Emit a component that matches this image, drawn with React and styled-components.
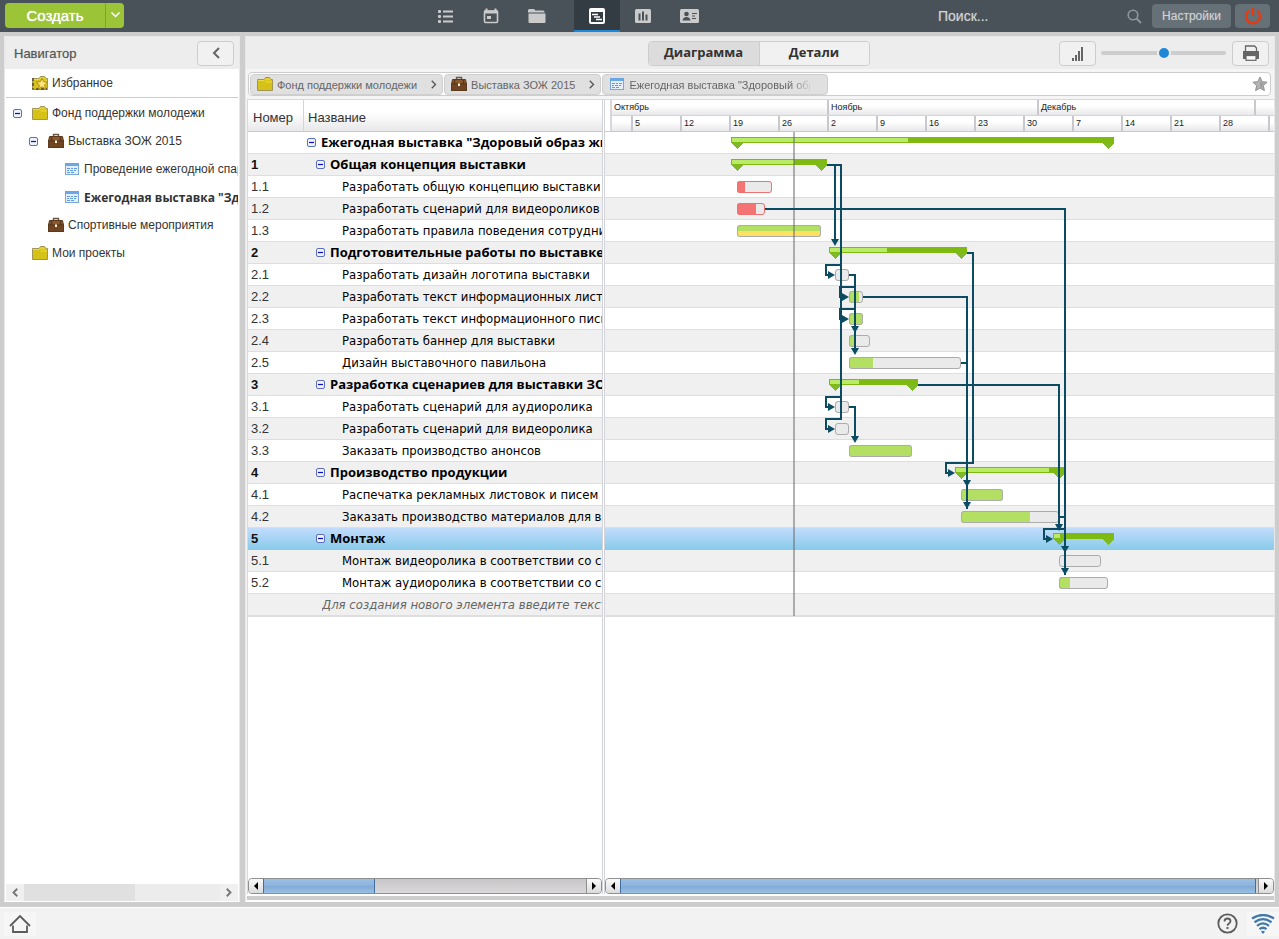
import React from 'react';
import styled, { createGlobalStyle, css } from 'styled-components';

const sans = '"Liberation Sans", Arial, sans-serif';
const tahoma = '"DejaVu Sans Condensed", Tahoma, sans-serif';
const tahomaBold = '"Open Sans", Tahoma, sans-serif';

const GlobalStyle = createGlobalStyle`
  *, *::before, *::after { box-sizing: border-box; }
  body { margin: 0; font-family: ${sans}; font-size: 12px; color: #333; background: #cdcdcd; }
  button, input { font: inherit; color: inherit; margin: 0; padding: 0; border: 0; background: none; }
  svg { display: block; flex: none; }
  ul { list-style: none; margin: 0; padding: 0; }
`;

/* ---------- page frame ---------- */

const Page = styled.div`
  min-height: 100vh;
  display: flex;
  flex-direction: column;
`;

const TopBar = styled.header`
  height: 32px;
  flex: none;
  display: flex;
  align-items: center;
  padding: 0 9px 0 5px;
  background: #495259;
`;

const Workspace = styled.main`
  flex: 1;
  min-height: 0;
  display: flex;
  gap: 5px;
  padding: 4px 4px 5px;
  background: #cdcdcd;
`;

const Footer = styled.footer`
  height: 32px;
  flex: none;
  display: flex;
  align-items: center;
  justify-content: space-between;
  padding: 0 0 0 4px;
  border-top: 1px solid #fff;
  background: #f2f2f2;
`;

const FooterButton = styled.button`
  display: flex;
  align-items: center;
  justify-content: center;
  width: 32px;
  height: 24px;
  background: ${(p) => (p.$lit ? '#f6f6f6' : 'none')};
`;

const FooterGroup = styled.div`
  display: flex;
  gap: 4px;
`;

/* ---------- top bar ---------- */

const CreateGroup = styled.div`
  display: flex;
  margin-top: -2px;
  border-radius: 4px;
  overflow: hidden;
  background: #9bc536;
`;

const CreateButton = styled.button`
  width: 100px;
  height: 25px;
  font-size: 15px;
  color: #fff;
  text-shadow: 0 0 1px #fff;
`;

const CreateMenuButton = styled.button`
  width: 19px;
  height: 25px;
  display: flex;
  align-items: center;
  justify-content: center;
  border-left: 1px solid #81a626;
`;

const Modules = styled.nav`
  display: flex;
  margin-left: 298px;
  height: 32px;
`;

const ModuleButton = styled.button`
  width: 46px;
  height: 32px;
  display: flex;
  align-items: center;
  justify-content: center;
  color: #cbcbcb;
  ${(p) =>
    p.$active &&
    css`
      margin-left: 14px;
      color: #fff;
      background: #333c43;
      border-bottom: 2px solid #1f87d8;
      padding-top: 2px;
    `}
`;

const SearchBox = styled.label`
  display: flex;
  align-items: center;
  margin-left: auto;
  width: 204px;
  margin-right: 10px;
`;

const SearchInput = styled.input`
  flex: 1;
  min-width: 0;
  font-size: 14px;
  outline: 0;
  &::placeholder { color: #d0d2d3; opacity: 1; text-shadow: 0 0 1px #999; }
`;

const SlateButton = styled.button`
  width: ${(p) => p.$width};
  height: 24px;
  margin-right: ${(p) => (p.$last ? '0' : '4px')};
  display: flex;
  align-items: center;
  justify-content: center;
  border-radius: 4px;
  background: #667077;
  color: #cfd2d4;
  text-shadow: 0 0 1px #999;
`;

/* ---------- panels ---------- */

const Panel = styled.section`
  display: flex;
  flex-direction: column;
  min-width: 0;
  border: 1px solid #e8e8e8;
  border-bottom: 1px solid #fff;
  background: ${(p) => (p.$main ? '#f5f5f5' : '#fff')};
  ${(p) => (p.$main ? 'flex: 1;' : 'width: 236px; flex: none;')}
`;

const PanelHead = styled.div`
  height: 32px;
  flex: none;
  display: flex;
  align-items: center;
  padding: 0 5px 0 ${(p) => (p.$main ? '2px' : '9px')};
  background: #ededed;
`;

const PanelTitle = styled.h2`
  flex: 1;
  margin: 0;
  font-size: 13px;
  font-weight: 400;
  color: #555;
  text-shadow: 0 0 1px #aaa;
`;

const ToolButton = styled.button`
  width: 37px;
  height: 25px;
  display: flex;
  align-items: center;
  justify-content: center;
  border: 1px solid #cdcdcd;
  border-radius: 4px;
  background: #f1f1f1;
`;

/* ---------- navigator ---------- */

const Tree = styled.ul`
  flex: 1;
  margin: 0 1px;
  overflow: hidden;
`;

const TreeItem = styled.li`
  height: 28px;
  display: flex;
  align-items: center;
  gap: 4px;
  padding-left: ${(p) => 7 + p.$level * 16}px;
  white-space: nowrap;
  ${(p) => p.$divided && css`
    height: 29px;
    border-bottom: 1px solid #cdcdcd;
    margin-bottom: 1px;
  `}
`;

const TreeToggle = styled.button`
  width: 9px;
  height: 9px;
  margin-right: 6px;
  visibility: ${(p) => (p.$hidden ? 'hidden' : 'visible')};
`;

const TreeLink = styled.a`
  color: #333;
  text-decoration: none;
  ${(p) => p.$current && css`font-family: ${tahomaBold}; font-weight: 700;`}
`;

const PlainScroll = styled.div`
  display: flex;
  height: 17px;
  margin: 0 1px;
  background: #ececec;
`;

const PlainArrow = styled.button`
  width: 18px;
  display: flex;
  align-items: center;
  justify-content: center;
  background: #f0f0f0;
`;

const PlainTrack = styled.div`
  flex: 1;
`;

const PlainThumb = styled.div`
  width: 111px;
  height: 17px;
  background: #e0e0e0;
`;

/* ---------- main toolbar and breadcrumb ---------- */

const ToolSide = styled.div`
  flex: 1;
  display: flex;
  align-items: center;
  justify-content: flex-end;
`;

const Tabs = styled.div`
  display: flex;
  border: 1px solid #cdcdcd;
  border-radius: 4px;
  overflow: hidden;
`;

const Tab = styled.button`
  width: 110px;
  height: 23px;
  padding: 0 0 2px;
  font-family: ${tahomaBold};
  font-size: 13px;
  font-weight: 700;
  color: #333;
  background: ${(p) => (p.$active ? '#dcdcdc' : '#f1f1f1')};
  & + & { border-left: 1px solid #cdcdcd; }
`;

const Zoom = styled.input`
  appearance: none;
  width: 125px;
  height: 14px;
  margin: 0 6px 0 5px;
  &::-webkit-slider-runnable-track {
    height: 4px;
    border-radius: 2px;
    background: #cdcdcd;
  }
  &::-webkit-slider-thumb {
    appearance: none;
    width: 14px;
    height: 14px;
    margin-top: -5px;
    border: 2px solid #ededed;
    border-radius: 50%;
    background: #1f87d8;
  }
`;

const Crumbs = styled.nav`
  height: 24px;
  flex: none;
  display: flex;
  align-items: center;
  gap: 1px;
  margin: 3px 3px 3px 2px;
  padding: 0 2px 0 1px;
  border: 1px solid #cdcdcd;
  border-radius: 4px;
  background: #fff;
`;

const Crumb = styled.a`
  height: 21px;
  display: flex;
  align-items: center;
  gap: 4px;
  padding: 0 5px 0 6px;
  border: 1px solid #cfcfcf;
  border-radius: 4px;
  background: #e0e0e0;
  color: #666;
  font-size: 11px;
  text-decoration: none;
  white-space: nowrap;
`;

const CrumbLabel = styled.span`
  padding-top: 2px;
  overflow: hidden;
  ${(p) => p.$clipped && css`
    width: 181px;
    margin-right: 12px;
    mask-image: linear-gradient(to right, #000 160px, transparent 184px);
  `}
`;

const CrumbArrow = styled.span`
  margin-left: 10px;
`;

const StarButton = styled.button`
  margin-left: auto;
`;

/* ---------- grid and chart ---------- */

const Split = styled.div`
  flex: 1;
  display: flex;
  margin-left: 1px;
  border-top: 1px solid #d8d8d8;
  background: #fff;
`;

const GridPane = styled.div`
  width: 358px;
  flex: none;
  display: flex;
  flex-direction: column;
  border-left: 1px solid #d8d8d8;
  border-right: 3px double #d3d3da;
`;

const ChartPane = styled.div`
  flex: 1;
  min-width: 0;
  display: flex;
  flex-direction: column;
`;

const headFill = css`
  background: linear-gradient(#fff 40%, #e8e8ea);
`;

const Grid = styled.table`
  width: 354px;
  table-layout: fixed;
  border-collapse: separate;
  border-spacing: 0;
`;

const HeadCell = styled.th`
  width: ${(p) => p.$width};
  height: 32px;
  padding: 3px 4px 0 5px;
  text-align: left;
  font-size: 13px;
  font-weight: 400;
  color: #333;
  border-bottom: 1px solid #c8c8ce;
  & + & { border-left: 1px solid #d3d3da; padding-left: 4px; }
  ${headFill}
`;

const rowFill = css`
  border-bottom: 1px solid ${(p) => (p.$selected ? '#8bcbea' : '#dedede')};
  background: ${(p) =>
    p.$selected ? 'linear-gradient(#c2dcfd, #8bcbea)' : p.$alt ? '#f0f0f0' : '#fff'};
`;

const cellText = css`
  height: 22px;
  line-height: 21px;
  overflow: hidden;
  white-space: nowrap;
  font-size: 13px;
`;

const GridRow = styled.tr``;

const NumberCell = styled.td`
  ${cellText}
  ${rowFill}
  padding: 0 3px;
  color: ${(p) => (p.$group ? '#111' : '#333')};
  font-weight: ${(p) => (p.$group ? 700 : 400)};
`;

const NameCell = styled.td`
  ${cellText}
  ${rowFill}
  padding: 0 0 0 ${(p) => [4, 13, 39, 19][p.$level]}px;
  color: #000;
  font-family: ${(p) => (p.$group ? tahomaBold : tahoma)};
  font-weight: ${(p) => (p.$group ? 700 : 400)};
`;

const NameLine = styled.div`
  height: 21px;
  display: flex;
  align-items: center;
  gap: 5px;
`;

const NewItem = styled.input`
  width: 100%;
  height: 21px;
  font-style: italic;
  outline: 0;
  &::placeholder { color: #666; opacity: 1; }
`;

const TimeScale = styled.div`
  height: 32px;
  overflow: hidden;
  border-bottom: 1px solid #c8c8ce;
  padding-left: 5px;
`;

const ScaleRow = styled.div`
  display: flex;
  height: ${(p) => (p.$weeks ? '15px' : '16px')};
  font-size: 9px;
  line-height: 14px;
  color: #222;
  ${headFill}
  border-bottom: ${(p) => (p.$weeks ? '0' : '1px solid #d3d3da')};
`;

const ScaleCell = styled.div`
  width: ${(p) => p.$days * 7}px;
  flex: none;
  overflow: hidden;
  padding-left: 2px;
  border-left: 2px solid ${(p) => (p.$first ? '#d8d8dc' : '#c8c8ce')};
`;

const ChartBody = styled.div`
  position: relative;
  overflow: hidden;
`;

const ChartRow = styled.div`
  height: 22px;
  ${rowFill}
`;

const ChartLayer = styled.svg`
  position: absolute;
  top: 0;
  left: 0;
`;

const Filler = styled.div`
  flex: 1;
  border-top: 1px solid #dedede;
`;

const Scrollbar = styled.div`
  display: flex;
  height: 16px;
  flex: none;
  border: 1px solid #8f8f8f;
  border-radius: 4px;
  overflow: hidden;
  background: linear-gradient(#c9c6c8, #dad8da);
`;

const ScrollArrow = styled.button`
  width: 14px;
  display: flex;
  align-items: center;
  justify-content: center;
  background: linear-gradient(#fafafa, #dcdcdc);
`;

const ScrollTrack = styled.div`
  flex: 1;
  display: flex;
  border: solid #8f8f8f;
  border-width: 0 1px;
`;

const ScrollThumb = styled.div`
  ${(p) => (p.$full ? 'flex: 1; margin-right: 2px;' : 'width: 112px;')}
  margin-left: -1px;
  border: solid #416f9f;
  border-width: 0 1px;
  background: linear-gradient(#9bbfe4, #8cb2dc 50%, #80aad7 52%, #9abfe2);
`;

const BottomRule = styled.div`
  height: 7px;
  flex: none;
  margin-left: 1px;
  border: solid #fff;
  border-width: 2px 0 1px;
  background: #cdcdcd;
`;

/* ---------- icons ---------- */

const Chevron = ({ left, size = 8, color = '#555', width = 2 }) => (
  <svg width={size} height={size * 1.5} viewBox="0 0 8 12" fill="none" stroke={color} strokeWidth={width}>
    <path d={left ? 'M7 1 2 6l5 5' : 'M1 1l5 5-5 5'} />
  </svg>
);

const ToggleIcon = () => (
  <svg width="9" height="9" viewBox="0 0 9 9">
    <rect x=".5" y=".5" width="8" height="8" rx="1.5" fill="#eef2fb" stroke="#5c6fbf" />
    <path d="M2 4.5h5" stroke="#0a0ac8" strokeWidth="1.2" />
  </svg>
);

const FolderIcon = ({ star }) => (
  <svg width="16" height="16" viewBox="0 0 16 16">
    <path d="M.5 3.500h6.500l1.500-2h4l1.500 2h1.500V14.500H.5z" fill="#dcc814" stroke="#a0955a" />
    <path d="M1 4h6.500l1.500 1.500h6V14H1z" fill="#d6c116" />
    <path d="M8 2.500h4.500l1 1.500h-6z" fill="#e6d42c" />
    <path d="M1 4.500h6.500M8.500 6h6.500" stroke="#eadc45" />
    {star && (
      <g>
        <path d="M1 3v11.500M4 14h11" stroke="#4e4630" strokeWidth="1.400" strokeDasharray="3 2" />
        <path d="M10 3.500l1.700 3.200 3.800.5-2.800 2.700.7 3.900-3.400-1.900-3.400 1.900.7-3.900L4.500 7.200l3.800-.5z" fill="#ffe27a" stroke="#a88414" strokeWidth=".9" />
      </g>
    )}
  </svg>
);

const CaseIcon = () => (
  <svg width="16" height="16" viewBox="0 0 16 16">
    <path d="M5.500 4V1.500h5V4" fill="none" stroke="#6b5545" strokeWidth="1.400" />
    <path d="M1.500 3.500h13l1 4.500H.5z" fill="#8a5a2c" stroke="#5a3b22" />
    <rect x=".5" y="8" width="15" height="6.500" fill="#704420" stroke="#5a3b22" />
    <path d="M3.500 4v4M12.500 4v4" stroke="#5d3516" strokeWidth="1.400" />
    <rect x="7" y="7.500" width="2" height="2.500" fill="#fff3d8" />
  </svg>
);

const PlanIcon = () => (
  <svg width="16" height="14" viewBox="0 0 16 14">
    <rect x="1.500" y="1.500" width="13" height="11" fill="#e4effb" stroke="#78a7dc" />
    <rect x="1" y="1" width="14" height="3" fill="#6ba6e6" />
    <path d="M3 6.500h3M7 6.500h2M10 6.500h3M3 8.500h2M6 8.500h3M10 8.500h2M3 10.500h3M7 10.500h3" stroke="#5f9be0" />
  </svg>
);

const treeIcons = { star: <FolderIcon star />, folder: <FolderIcon />, case: <CaseIcon />, plan: <PlanIcon /> };

const ListIcon = () => (
  <svg width="15" height="13" viewBox="0 0 15 13" fill="currentColor">
    {[0, 5, 10].map((y) => (
      <g key={y}>
        <rect x="0" y={y} width="3" height="3" rx="1" />
        <rect x="5" y={y + 0.5} width="10" height="2" />
      </g>
    ))}
  </svg>
);

const CalendarIcon = () => (
  <svg width="16" height="16" viewBox="0 0 16 16">
    <path d="M3.500 .5v3M12.500 .5v3" stroke="currentColor" strokeWidth="2" />
    <rect x="1.500" y="3" width="13" height="11.500" rx="1" fill="none" stroke="currentColor" strokeWidth="1.600" />
    <path d="M1 2.500h14v3H1z" fill="currentColor" />
    <rect x="4" y="8" width="4" height="3" fill="currentColor" />
  </svg>
);

const FoldersIcon = () => (
  <svg width="18" height="16" viewBox="0 0 18 16" fill="currentColor">
    <path d="M0 4.500V2.500Q0 1 1.500 1H6l1.500 1.500H15Q16.500 2.500 16.500 4v.5z" />
    <path d="M.5 5.500h17v8.500q0 1-1 1h-15q-1 0-1-1z" />
  </svg>
);

const GanttIcon = () => (
  <svg width="16" height="16" viewBox="0 0 16 16" fill="none" stroke="currentColor">
    <rect x="1" y="1" width="14" height="14" rx="1" strokeWidth="2" />
    <path d="M1 2.500h14" strokeWidth="3" />
    <path d="M3 6.500h6M5 9h6M7 11.500h6" strokeWidth="1.600" />
  </svg>
);

const StatsIcon = () => (
  <svg width="16" height="16" viewBox="0 0 16 16">
    <rect x="0" y="1" width="16" height="14" rx="1.500" fill="currentColor" />
    <path d="M4.500 5.500v7M8 3.500v9M11.500 6.500v6" stroke="#495259" strokeWidth="2" />
  </svg>
);

const ContactIcon = () => (
  <svg width="19" height="14" viewBox="0 0 19 14">
    <rect width="19" height="14" rx="1.500" fill="currentColor" />
    <circle cx="6.500" cy="5" r="2.300" fill="#495259" />
    <path d="M2.500 11.500Q3 8 6.500 8t4 3.500z" fill="#495259" />
    <path d="M12 4.500h5M12 7h3M12 9.500h4" stroke="#495259" strokeWidth="1.200" />
  </svg>
);

const SearchIcon = () => (
  <svg width="15" height="15" viewBox="0 0 15 15" fill="none" stroke="#8f9599">
    <circle cx="6" cy="6" r="4.800" strokeWidth="1.600" />
    <path d="M9.500 9.500l4.500 4.500" strokeWidth="2" />
  </svg>
);

const PowerIcon = () => (
  <svg width="18" height="18" viewBox="0 0 18 18" fill="none" stroke="#e63a12" strokeWidth="2.400">
    <path d="M5 3.500a7 7 0 1 0 8 0M9 1v8" />
  </svg>
);

const SignalIcon = () => (
  <svg width="12" height="15" viewBox="0 0 12 15" fill="#666">
    <path d="M0 12h2v3H0zM3 9h2v6H3zM6 5h2v10H6zM9 1h2v14H9z" />
  </svg>
);

const PrintIcon = () => (
  <svg width="18" height="16" viewBox="0 0 18 16">
    <path d="M3.500 6V1h9l2 2v3" fill="#f1f1f1" stroke="#666" strokeWidth="1.300" />
    <path d="M1 6h16v8h-3v-3H4v3H1z" fill="#666" />
    <rect x="4" y="10.500" width="10" height="4.800" fill="#f8f8f8" stroke="#666" strokeWidth="1.200" />
  </svg>
);

const StarIcon = () => (
  <svg width="16" height="16" viewBox="0 0 16 16">
    <path d="M8 1l2.100 4.700 5 .500-3.800 3.400 1.100 5L8 12l-4.400 2.600 1.100-5L.900 6.200l5-.5z" fill="#b4b4b4" stroke="#8f8f8f" />
    <path d="M8 4l1.200 2.800 3 .300-2.300 2 .700 3L8 10.500" fill="#9c9c9c" />
  </svg>
);

const ArrowGlyph = ({ left }) => (
  <svg width="6" height="8" viewBox="0 0 6 8">
    <path d={left ? 'M5 0v8L1 4z' : 'M1 0v8l4-4z'} fill="#000" />
  </svg>
);

const HomeIcon = () => (
  <svg width="22" height="19" viewBox="0 0 22 19" fill="none" stroke="#5c5c5c" strokeWidth="1.800">
    <path d="M1 12 11 2l10 10" />
    <path d="M4 11.500v6.500h14v-6.500" />
  </svg>
);

const HelpIcon = () => (
  <svg width="21" height="21" viewBox="0 0 21 21" fill="none" stroke="#5c5c5c" strokeWidth="1.800">
    <circle cx="10.500" cy="10.500" r="9.200" />
    <path d="M7.500 8.500q0-3 3-3t3 2.600q0 1.500-1.500 2.500t-1.500 2.200" />
    <path d="M10.500 14v2" strokeWidth="2" />
  </svg>
);

const WifiIcon = () => (
  <svg width="24" height="20" viewBox="0 0 24 20" fill="none" stroke="#4378ad" strokeWidth="2.300">
    <path d="M1 4.500Q12-2.500 23 4.500M3.500 8.200Q12 2 20.500 8.200M6 11.800Q12 7 18 11.800M8.500 15.200q3.500-3 7 0" />
    <path d="M10 17.500q2-1.500 4 0l-2 2.500z" fill="#4378ad" stroke="none" />
  </svg>
);

/* ---------- data ---------- */

const tree = [
  { name: 'Избранное', icon: 'star', level: 0, divided: true },
  { name: 'Фонд поддержки молодежи', icon: 'folder', level: 0, open: true },
  { name: 'Выставка ЗОЖ 2015', icon: 'case', level: 1, open: true },
  { name: 'Проведение ежегодной спартакиады', icon: 'plan', level: 2 },
  { name: 'Ежегодная выставка "Здоровый образ жизни"', icon: 'plan', level: 2, current: true },
  { name: 'Спортивные мероприятия', icon: 'case', level: 1 },
  { name: 'Мои проекты', icon: 'folder', level: 0 },
];

/* from, to and done are distances along the time axis */
const tasks = [
  { no: '', name: 'Ежегодная выставка "Здоровый образ жизни"', level: 0, from: 126, done: 303, to: 509 },
  { no: '1', name: 'Общая концепция выставки', level: 1, from: 126, done: 189, to: 222 },
  { no: '1.1', name: 'Разработать общую концепцию выставки (тема)', level: 2, from: 132, done: 140, to: 167, late: true },
  { no: '1.2', name: 'Разработать сценарий для видеороликов и аудио', level: 2, from: 132, done: 151, to: 160, late: true },
  { no: '1.3', name: 'Разработать правила поведения сотрудников', level: 2, from: 132, done: 216, to: 216, warn: true },
  { no: '2', name: 'Подготовительные работы по выставке', level: 1, from: 224, done: 282, to: 362 },
  { no: '2.1', name: 'Разработать дизайн логотипа выставки', level: 2, from: 230, done: 230, to: 244 },
  { no: '2.2', name: 'Разработать текст информационных листовок', level: 2, from: 244, done: 254, to: 258 },
  { no: '2.3', name: 'Разработать текст информационного письма', level: 2, from: 244, done: 258, to: 258 },
  { no: '2.4', name: 'Разработать баннер для выставки', level: 2, from: 244, done: 250, to: 265 },
  { no: '2.5', name: 'Дизайн выставочного павильона', level: 2, from: 244, done: 268, to: 356 },
  { no: '3', name: 'Разработка сценариев для выставки ЗОЖ', level: 1, from: 224, done: 254, to: 313 },
  { no: '3.1', name: 'Разработать сценарий для аудиоролика', level: 2, from: 230, done: 230, to: 244 },
  { no: '3.2', name: 'Разработать сценарий для видеоролика', level: 2, from: 230, done: 230, to: 244 },
  { no: '3.3', name: 'Заказать производство анонсов', level: 2, from: 244, done: 307, to: 307 },
  { no: '4', name: 'Производство продукции', level: 1, from: 350, done: 444, to: 460 },
  { no: '4.1', name: 'Распечатка рекламных листовок и писем', level: 2, from: 356, done: 398, to: 398 },
  { no: '4.2', name: 'Заказать производство материалов для выставки', level: 2, from: 356, done: 425, to: 454 },
  { no: '5', name: 'Монтаж', level: 1, from: 448, done: 455, to: 509, selected: true },
  { no: '5.1', name: 'Монтаж видеоролика в соответствии со сценарием', level: 2, from: 454, done: 454, to: 496 },
  { no: '5.2', name: 'Монтаж аудиоролика в соответствии со сценарием', level: 2, from: 454, done: 465, to: 503 },
];

const months = [['Октябрь', 31], ['Ноябрь', 30], ['Декабрь', 31], ['', 12]];
const weeks = [['', 3], ...[5, 12, 19, 26, 2, 9, 16, 23, 30, 7, 14, 21, 28].map((d) => [d, 7]), ['', 7]];

const links = [
  'M222 33h14v254h-15v10h4',
  'M230 33v77',
  'M236 133h-15v10h4',
  'M236 265h-15v10h4',
  'M160 77h300v366',
  'M244 143h6v76',
  'M250 155h-15v10h4',
  'M250 177h-15v10h4',
  'M258 165h104v212',
  'M356 231h6',
  'M362 121h6v210h-27v10h4',
  'M313 253h141v142',
  'M244 275h6v30',
  'M454 385h6',
  'M460 397h-21v10h4',
];

const downHeads = [[230, 114], [250, 201], [250, 223], [250, 311], [362, 355], [362, 377], [454, 399], [460, 421], [460, 443]];
const rightHeads = [[230, 143], [244, 165], [244, 187], [230, 275], [230, 297], [350, 341], [448, 407]];

/* ---------- chart ---------- */

const SummaryBar = ({ task, y }) => (
  <g shapeRendering="crispEdges">
    <rect x={task.from} y={y + 5} width={task.to - task.from} height="6" fill="#7fba12" />
    <rect x={task.from + 1} y={y + 6} width={task.done - task.from - 1} height="4" fill="#b9eb66" />
    <path
      d={`M${task.from} ${y + 11}h12l-6 6zM${task.to - 12} ${y + 11}h12l-6 6z`}
      fill="#7db92b"
    />
  </g>
);

const TaskBar = ({ task, y }) => {
  const width = task.to - task.from;
  const done = task.done - task.from;
  const id = `clip-${task.no}`;
  return (
    <g>
      <clipPath id={id}>
        <rect x={task.from} y={y + 5} width={width} height="12" rx="3" />
      </clipPath>
      <g clipPath={`url(#${id})`}>
        <rect x={task.from} y={y + 5} width={width} height="12" fill="#eaeaea" />
        <rect x={task.from} y={y + 5} width={done} height="12" fill={task.late ? '#f47474' : '#b3df63'} />
        {task.warn && <rect x={task.from} y={y + 11} width={width} height="6" fill="#ffe162" />}
      </g>
      <rect
        x={task.from + 0.5}
        y={y + 5.5}
        width={width - 1}
        height="11"
        rx="2.5"
        fill="none"
        stroke={task.late ? '#f07070' : '#acacac'}
      />
    </g>
  );
};

const Chart = () => (
  <ChartBody>
    {tasks.map((t, i) => (
      <ChartRow key={t.name} $alt={i % 2 === 1} $selected={t.selected} />
    ))}
    <ChartRow $alt />
    <ChartLayer width="100%" height="484" role="img" aria-label="Диаграмма Ганта">
      {tasks.map((t, i) =>
        t.level < 2 ? <SummaryBar key={t.name} task={t} y={i * 22} /> : <TaskBar key={t.name} task={t} y={i * 22} />
      )}
      <rect x="188" y="0" width="2" height="484" fill="#666" fillOpacity=".5" />
      <path d={links.join('')} fill="none" stroke="#0b4c63" strokeWidth="2" />
      {downHeads.map(([x, y]) => (
        <path key={`${x}-${y}`} d={`M${x - 4} ${y - 7}h8l-4 7z`} fill="#0b4c63" />
      ))}
      {rightHeads.map(([x, y]) => (
        <path key={`${x}-${y}`} d={`M${x - 7} ${y - 4}v8l7-4z`} fill="#0b4c63" />
      ))}
    </ChartLayer>
  </ChartBody>
);

const PaneScrollbar = ({ full }) => (
  <Scrollbar>
    <ScrollArrow aria-label="Влево"><ArrowGlyph left /></ScrollArrow>
    <ScrollTrack><ScrollThumb $full={full} /></ScrollTrack>
    <ScrollArrow aria-label="Вправо"><ArrowGlyph /></ScrollArrow>
  </Scrollbar>
);

const modules = [
  ['Задачи', ListIcon],
  ['Календарь', CalendarIcon],
  ['Файлы', FoldersIcon],
  ['Проекты', GanttIcon],
  ['Отчеты', StatsIcon],
  ['Контакты', ContactIcon],
];

export default function App() {
  return (
    <Page>
      <GlobalStyle />
      <TopBar>
        <CreateGroup>
          <CreateButton>Создать</CreateButton>
          <CreateMenuButton aria-label="Варианты создания">
            <svg width="9" height="6" viewBox="0 0 9 6" fill="none" stroke="#fff" strokeWidth="1.500">
              <path d="M.5.5l4 4 4-4" />
            </svg>
          </CreateMenuButton>
        </CreateGroup>
        <Modules>
          {modules.map(([label, Icon]) => (
            <ModuleButton key={label} aria-label={label} $active={label === 'Проекты'}>
              <Icon />
            </ModuleButton>
          ))}
        </Modules>
        <SearchBox>
          <SearchInput aria-label="Поиск" placeholder="Поиск..." />
          <SearchIcon />
        </SearchBox>
        <SlateButton $width="79px">Настройки</SlateButton>
        <SlateButton $width="35px" $last aria-label="Выход"><PowerIcon /></SlateButton>
      </TopBar>

      <Workspace>
        <Panel>
          <PanelHead>
            <PanelTitle>Навигатор</PanelTitle>
            <ToolButton aria-label="Свернуть"><Chevron left color="#666" /></ToolButton>
          </PanelHead>
          <Tree>
            {tree.map((n) => (
              <TreeItem key={n.name} $level={n.level} $divided={n.divided}>
                <TreeToggle $hidden={!n.open} aria-label="Свернуть ветку"><ToggleIcon /></TreeToggle>
                {treeIcons[n.icon]}
                <TreeLink href="#" $current={n.current}>{n.name}</TreeLink>
              </TreeItem>
            ))}
          </Tree>
          <PlainScroll>
            <PlainArrow aria-label="Влево"><Chevron left size={6} color="#777" width={2.5} /></PlainArrow>
            <PlainTrack><PlainThumb /></PlainTrack>
            <PlainArrow aria-label="Вправо"><Chevron size={6} color="#777" width={2.5} /></PlainArrow>
          </PlainScroll>
        </Panel>

        <Panel $main>
          <PanelHead $main>
            <ToolSide />
            <Tabs>
              <Tab $active>Диаграмма</Tab>
              <Tab>Детали</Tab>
            </Tabs>
            <ToolSide>
              <ToolButton aria-label="Загрузка"><SignalIcon /></ToolButton>
              <Zoom type="range" aria-label="Масштаб" min="0" max="100" defaultValue="50" />
              <ToolButton aria-label="Печать"><PrintIcon /></ToolButton>
            </ToolSide>
          </PanelHead>
          <Crumbs>
            <Crumb href="#">
              <FolderIcon />
              <CrumbLabel>Фонд поддержки молодежи</CrumbLabel>
              <CrumbArrow><Chevron size={6} width={1.8} /></CrumbArrow>
            </Crumb>
            <Crumb href="#">
              <CaseIcon />
              <CrumbLabel>Выставка ЗОЖ 2015</CrumbLabel>
              <CrumbArrow><Chevron size={6} width={1.8} /></CrumbArrow>
            </Crumb>
            <Crumb href="#">
              <PlanIcon />
              <CrumbLabel $clipped>Ежегодная выставка "Здоровый образ жизни"</CrumbLabel>
            </Crumb>
            <StarButton aria-label="В избранное"><StarIcon /></StarButton>
          </Crumbs>
          <Split>
            <GridPane>
              <Grid>
                <thead>
                  <GridRow>
                    <HeadCell $width="55px">Номер</HeadCell>
                    <HeadCell>Название</HeadCell>
                  </GridRow>
                </thead>
                <tbody>
                  {tasks.map((t, i) => {
                    const look = { $alt: i % 2 === 1, $selected: t.selected, $group: t.level < 2 };
                    return (
                      <GridRow key={t.name}>
                        <NumberCell {...look}>{t.no}</NumberCell>
                        <NameCell {...look} $level={t.level}>
                          <NameLine>
                            {t.level < 2 && <button aria-label="Свернуть"><ToggleIcon /></button>}
                            {t.name}
                          </NameLine>
                        </NameCell>
                      </GridRow>
                    );
                  })}
                  <GridRow>
                    <NumberCell $alt />
                    <NameCell $alt $level={3}>
                      <NewItem aria-label="Новый элемент" placeholder="Для создания нового элемента введите текст" />
                    </NameCell>
                  </GridRow>
                </tbody>
              </Grid>
              <Filler />
              <PaneScrollbar />
            </GridPane>
            <ChartPane>
              <TimeScale>
                <ScaleRow>
                  {months.map(([m, days], i) => (
                    <ScaleCell key={m} $days={days} $first={i === 0}>{m}</ScaleCell>
                  ))}
                </ScaleRow>
                <ScaleRow $weeks>
                  {weeks.map(([d, days], i) => (
                    <ScaleCell key={i} $days={days} $first={i === 0}>{d}</ScaleCell>
                  ))}
                </ScaleRow>
              </TimeScale>
              <Chart />
              <Filler />
              <PaneScrollbar full />
            </ChartPane>
          </Split>
          <BottomRule />
        </Panel>
      </Workspace>

      <Footer>
        <FooterButton $lit aria-label="Домой"><HomeIcon /></FooterButton>
        <FooterGroup>
          <FooterButton aria-label="Справка"><HelpIcon /></FooterButton>
          <FooterButton $lit aria-label="Соединение"><WifiIcon /></FooterButton>
        </FooterGroup>
      </Footer>
    </Page>
  );
}
